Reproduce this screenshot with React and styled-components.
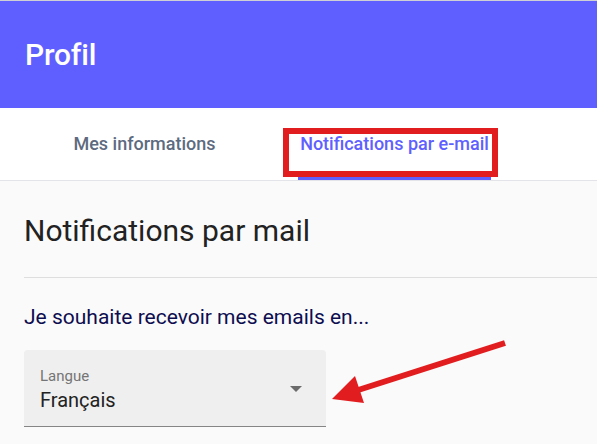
import React from "react";
import styled, { createGlobalStyle } from "styled-components";

const Global = createGlobalStyle`
  html, body { margin: 0; padding: 0; }
  body { background: #fafafa; font-family: Roboto, "Noto Sans", Arial, sans-serif; }
  * { box-sizing: border-box; }
`;

const Page = styled.div`
  position: relative;
  width: 597px;
  min-height: 444px;
  overflow: hidden;
`;

const Header = styled.header`
  height: 108px;
  background: #5f5fff;
  border-top: 1px solid #cfcfd6;
  display: flex;
  align-items: center;
  padding-left: 25px;
`;

const HeaderTitle = styled.h1`
  margin: 0;
  color: #ffffff;
  font-size: 30px;
  font-weight: 500;
  letter-spacing: -0.2px;
`;

const TabBar = styled.nav`
  height: 73px;
  background: #ffffff;
  border-bottom: 1px solid #e3e3ea;
  display: flex;
  padding-left: 48px;
  gap: 57px;
`;

const Tab = styled.div`
  position: relative;
  width: 193px;
  height: 72px;
  display: flex;
  align-items: center;
  justify-content: center;
  padding-top: 2px;
  font-size: 18px;
  font-weight: 500;
  color: ${(p) => (p.$active ? "#6060ff" : "#5d6a80")};
  border-bottom: 3px solid ${(p) => (p.$active ? "#5f5fff" : "transparent")};
`;

const Highlight = styled.span`
  position: absolute;
  left: -15px;
  top: 20px;
  width: 215px;
  height: 49px;
  border: 6px solid #e21d1f;
  pointer-events: none;
`;

const Content = styled.main`
  padding-left: 24px;
`;

const Title = styled.h2`
  margin: 32px 0 0;
  font-size: 30px;
  line-height: 36px;
  font-weight: 400;
  color: #222222;
`;

const Divider = styled.hr`
  margin: 28px 0 0;
  border: 0;
  border-top: 1px solid #dedede;
`;

const Subtitle = styled.p`
  margin: 27px 0 0;
  font-size: 21px;
  line-height: 24px;
  color: #0d0d50;
`;

const Select = styled.div`
  margin-top: 21px;
  width: 302px;
  height: 77px;
  background: #efefef;
  border-radius: 4px 4px 0 0;
  border-bottom: 1px solid #858585;
  display: flex;
  align-items: center;
  padding: 0 24px 0 16px;
`;

const SelectText = styled.div`
  flex: 1;
  display: flex;
  flex-direction: column;
  align-self: flex-start;
  padding-top: 17px;
  gap: 3px;
`;

const Label = styled.span`
  font-size: 15px;
  line-height: 18px;
  color: #757575;
`;

const Value = styled.span`
  font-size: 20px;
  line-height: 24px;
  color: #222222;
`;

const Caret = styled.span`
  width: 0;
  height: 0;
  border-left: 6px solid transparent;
  border-right: 6px solid transparent;
  border-top: 6px solid #6b6b6b;
  margin-top: 2px;
`;

const ArrowOverlay = styled.svg`
  position: absolute;
  left: 0;
  top: 0;
  pointer-events: none;
`;

export default function App() {
  return (
    <>
      <Global />
      <Page>
        <Header>
          <HeaderTitle>Profil</HeaderTitle>
        </Header>
        <TabBar>
          <Tab>Mes informations</Tab>
          <Tab $active>
            Notifications par e-mail
            <Highlight />
          </Tab>
        </TabBar>
        <Content>
          <Title>Notifications par mail</Title>
          <Divider />
          <Subtitle>Je souhaite recevoir mes emails en...</Subtitle>
          <Select>
            <SelectText>
              <Label>Langue</Label>
              <Value>Français</Value>
            </SelectText>
            <Caret />
          </Select>
        </Content>
        <ArrowOverlay width="597" height="444" viewBox="0 0 597 444">
          <line x1="505" y1="343" x2="352" y2="392" stroke="#e21d1f" strokeWidth="6" />
          <polygon points="332,399 355,376 364,403" fill="#e21d1f" />
        </ArrowOverlay>
      </Page>
    </>
  );
}
